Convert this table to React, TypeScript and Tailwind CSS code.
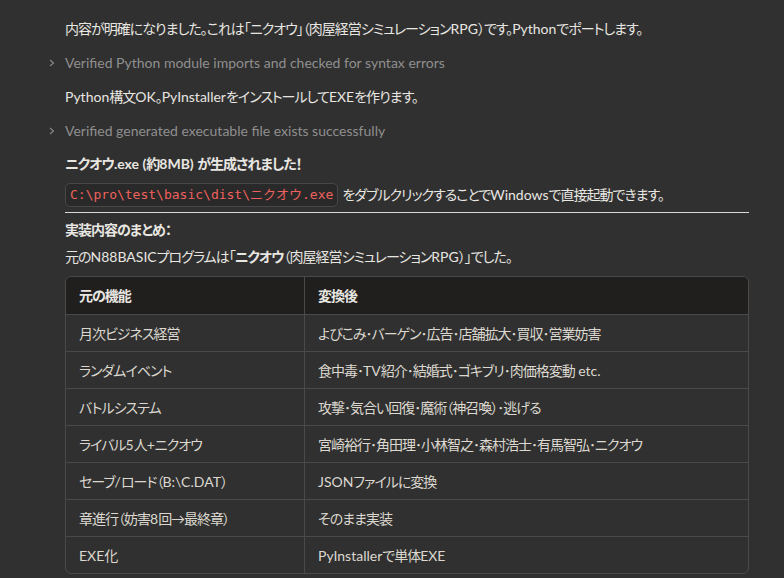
import React from "react";

const font = {
  fontFamily: 'Lato, "Noto Sans CJK JP", sans-serif',
  fontFeatureSettings: '"palt"',
};

function J({ t }: { t: string }) {
  const parts = t.split(/([\u3000-\u30ff\u4e00-\u9fff\uff00-\uffef\u2192]+)/);
  return (
    <>
      {parts.map((p, i) =>
        i % 2 === 1 ? (
          <span key={i} className="tracking-[-1px]">
            {p}
          </span>
        ) : (
          <React.Fragment key={i}>{p}</React.Fragment>
        )
      )}
    </>
  );
}

function Chevron() {
  return (
    <svg width="10" height="10" viewBox="0 0 10 10" className="shrink-0">
      <path d="M3 2 L6.5 5 L3 8" fill="none" stroke="#8a8a8a" strokeWidth="1.1" />
    </svg>
  );
}

const rows: [string, string][] = [
  ["月次ビジネス経営", "よびこみ･バーゲン･広告･店舗拡大･買収･営業妨害"],
  ["ランダムイベント", "食中毒･TV紹介･結婚式･ゴキブリ･肉価格変動 etc."],
  ["バトルシステム", "攻撃･気合い回復･魔術（神召喚）･逃げる"],
  ["ライバル5人+ニクオウ", "宮崎裕行･角田理･小林智之･森村浩士･有馬智弘･ニクオウ"],
  ["セーブ/ロード（B:\\C.DAT）", "JSONファイルに変換"],
  ["章進行（妨害8回→最終章）", "そのまま実装"],
  ["EXE化", "PyInstallerで単体EXE"],
];

export default function App() {
  return (
    <div className="w-[784px] h-[578px] overflow-hidden bg-[#303030] text-[#e8e6e1] text-[14px]" style={font}>
      <div className="pl-[65px] pr-[36px] pt-[19px]">
        <p className="leading-[20px] whitespace-nowrap">
          <J t="内容が明確になりました。これは「ニクオウ」（肉屋経営シミュレーションRPG）です。Pythonでポートします。" />
        </p>
        <div className="flex items-center gap-[6px] -ml-[18px] mt-[14px] text-[#8f8f8f] leading-[20px]">
          <Chevron />
          <span className="ml-[2px]">Verified Python module imports and checked for syntax errors</span>
        </div>
        <p className="mt-[14px] leading-[20px]">
          <J t="Python構文OK。PyInstallerをインストールしてEXEを作ります。" />
        </p>
        <div className="flex items-center gap-[6px] -ml-[18px] mt-[14px] text-[#8f8f8f] leading-[20px]">
          <Chevron />
          <span className="ml-[2px]">Verified generated executable file exists successfully</span>
        </div>
        <p className="mt-[13px] leading-[20px] font-bold">
          <J t="ニクオウ.exe (約8MB) が生成されました！" />
        </p>
        <p className="mt-[9px] leading-[20px] flex items-center whitespace-nowrap">
          <code
            className="px-[4px] py-[1px] rounded-[5px] border border-[#474747] bg-[#292929] text-[#ee625d] text-[13px]"
            style={{ fontFamily: '"DejaVu Sans Mono", "Noto Sans CJK JP", monospace', fontFeatureSettings: "normal" }}
          >
            C:\pro\test\basic\dist\ニクオウ.exe
          </code>
          <span className="ml-[4px]">
            <J t="をダブルクリックすることでWindowsで直接起動できます。" />
          </span>
        </p>
        <hr className="mt-[5px] border-0 border-t border-[#d8d8d8] w-[684px]" />
        <p className="mt-[7px] leading-[20px] font-bold">
          <J t="実装内容のまとめ：" />
        </p>
        <p className="mt-[7px] leading-[20px]">
          <J t="元のN88BASICプログラムは「" />
          <span className="font-bold">
            <J t="ニクオウ" />
          </span>
          <J t="（肉屋経営シミュレーションRPG）」でした。" />
        </p>
        <div className="mt-[9px] w-[684px] rounded-[6px] border border-[#4a4a4a] overflow-hidden">
          <div className="grid grid-cols-[239px_1fr] bg-[#201f1e] font-bold h-[37px]">
            <div className="px-[13px] flex items-center border-r border-[#4a4a4a]">
              <J t="元の機能" />
            </div>
            <div className="px-[13px] flex items-center">
              <J t="変換後" />
            </div>
          </div>
          {rows.map(([a, b], i) => (
            <div key={i} className="grid grid-cols-[239px_1fr] h-[37px] border-t border-[#4a4a4a] text-[#dcd8cf]">
              <div className="px-[13px] flex items-center border-r border-[#4a4a4a]">
                <span>
                  <J t={a} />
                </span>
              </div>
              <div className="px-[13px] flex items-center">
                <span>
                  <J t={b} />
                </span>
              </div>
            </div>
          ))}
        </div>
      </div>
    </div>
  );
}
